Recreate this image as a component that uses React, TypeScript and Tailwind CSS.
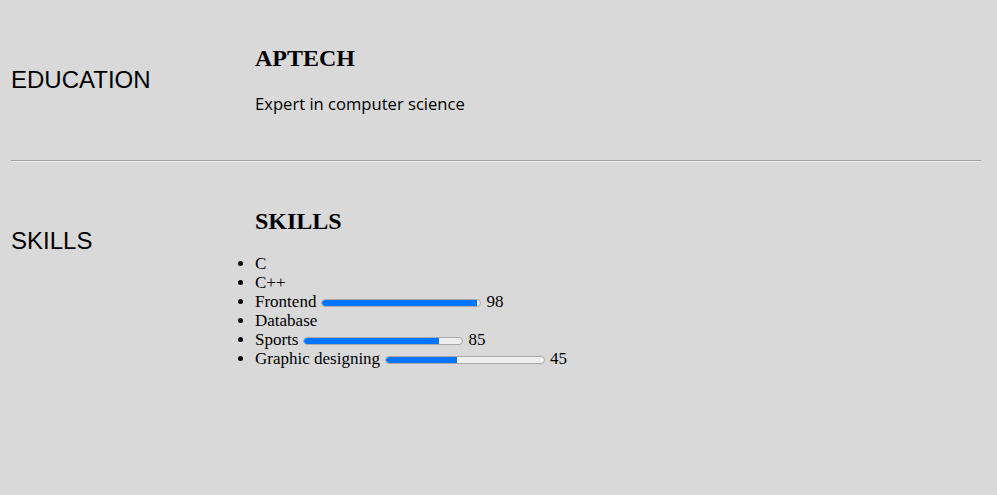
import React from "react";

type Skill = { name: string; value?: number };

const skills: Skill[] = [
  { name: "C" },
  { name: "C++" },
  { name: "Frontend", value: 98 },
  { name: "Database" },
  { name: "Sports", value: 85 },
  { name: "Graphic designing", value: 45 },
];

function Bar({ value }: { value: number }) {
  return (
    <span className="inline-block w-[160px] h-[8px] ml-[5px] mr-[5px] rounded-full border border-[#a8a8a8] bg-[#efefef] overflow-hidden">
      <span className="block h-full bg-[#0075ff] rounded-l-full" style={{ width: `${value}%` }} />
    </span>
  );
}

export default function App() {
  return (
    <div className="min-h-[495px] bg-[#d9d9d9] text-black pl-[11px] pr-[16px]">
      <section className="flex items-start pt-[44px] pb-[44px]">
        <div className="w-[244px] mt-[22px] text-[24px] leading-[28px] font-['Liberation_Sans',Arial,sans-serif]">
          EDUCATION
        </div>
        <div>
          <h2 className="text-[24px] leading-[28px] font-bold font-['Liberation_Serif','Times_New_Roman',serif]">
            APTECH
          </h2>
          <p className="mt-[20px] text-[16.6px] leading-[24px] font-['Open_Sans','Noto_Sans',sans-serif]">
            Expert in computer science
          </p>
        </div>
      </section>
      <hr className="border-0 border-t border-b border-t-[#a2a2a2] border-b-[#ececec]" />
      <section className="flex items-start pt-[45px]">
        <div className="w-[244px] mt-[20px] text-[24px] leading-[28px] font-['Liberation_Sans',Arial,sans-serif]">
          SKILLS
        </div>
        <div>
          <h2 className="text-[24px] leading-[28px] font-bold font-['Liberation_Serif','Times_New_Roman',serif]">
            SKILLS
          </h2>
          <ul className="mt-[19px] list-disc list-outside text-[17px] leading-[19px] font-['Liberation_Serif','Times_New_Roman',serif]">
            {skills.map((s) => (
              <li key={s.name}>
                {s.name}
                {s.value !== undefined && (
                  <>
                    <Bar value={s.value} />
                    <span>{s.value}</span>
                  </>
                )}
              </li>
            ))}
          </ul>
        </div>
      </section>
    </div>
  );
}
